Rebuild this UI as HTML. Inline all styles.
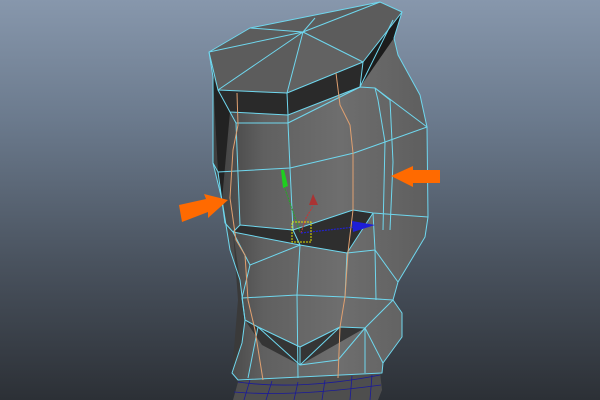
<!DOCTYPE html>
<html><head><style>
html,body{margin:0;padding:0;width:600px;height:400px;overflow:hidden}
body{background:linear-gradient(#8797ac 0%,#6b7a8d 30%,#4a535f 65%,#2c3036 100%)}
svg{position:absolute;left:0;top:0}
</style></head><body>
<svg width="600" height="400" viewBox="0 0 600 400">
<defs>
<linearGradient id="g1" x1="0" x2="1"><stop offset="0" stop-color="#3c3c3c"/><stop offset="0.25" stop-color="#606060"/><stop offset="0.6" stop-color="#6e6e6e"/><stop offset="1" stop-color="#5e5e5e"/></linearGradient>
</defs>
<path d="M233,400 L238,382 L262,378 L380,372 L382,390 L378,400 Z" fill="#4e4e4e"/>
<g stroke="#1a1a9a" stroke-width="0.8" fill="none">
<path d="M238,382 C280,388 330,385 380,375"/><path d="M234,392 C280,396 330,392 381,385"/>
<path d="M250,380 L244,400 M272,381 L266,400 M298,382 L294,400 M325,380 L322,400 M352,376 L350,400 M372,375 L370,400"/>
</g>
<path d="M209,52 L250,28 L380,2 L402,12 L394,38 L398,55 L420,95 L427,127 L428,217 L425,237 L398,282 L393,300 L402,313 L402,337 L383,363 L382,373 L238,380 L232,373 L242,343 L245,320 L240,280 L230,250 L222,200 L213,163 L213,77 Z" fill="url(#g1)"/>
<path d="M209,52 L250,28 L380,2 L402,12 L363,62 L287,93 L218,90 Z" fill="#5c5c5c"/>
<path d="M303,32 L363,62 L287,93 Z" fill="#626262"/>
<path d="M218,90 L287,93 L363,62 L360,87 L288,115 L230,112 Z" fill="#2a2a2a"/>
<path d="M363,62 L402,12 L394,38 L360,87 Z" fill="#1c1c1c"/>
<path d="M213,77 L218,90 L230,112 L222,200 L225,223 L218,172 Z" fill="#222"/>
<path d="M240,225 L293,230 L353,210 L373,213 L347,253 L300,245 L233,232 Z" fill="#2e2e2e"/>
<path d="M245,320 L258,327 L300,347 L340,327 L365,328 L300,365 L262,345 Z" fill="#353535"/>
<path d="M233,232 L240,280 L245,320 L242,343 L232,373 L238,300 Z" fill="#3a3a3a"/>
<g stroke="#6fd7ee" stroke-width="1" fill="none" stroke-linejoin="round">
<path d="M209,52 L250,28 L380,2 L402,12 L394,38 L398,55 L420,95 L427,127 L428,217 L425,237 L398,282 L393,300 L402,313 L402,337 L383,363 L382,373 L238,380 L232,373 L242,343 L245,320 L240,280 L230,250 L222,200 L213,163 L213,77 Z"/>
<path d="M209,52 L218,90 L287,93 L363,62 L402,12"/>
<path d="M250,28 L303,32 L380,2 M209,52 L303,32 L363,62 M218,90 L303,32 L287,93 M303,32 L315,18"/>
<path d="M218,90 L230,112 L288,115 L287,93 M288,115 L360,87 L363,62 M360,87 L393,20"/>
<path d="M230,112 L236,123 L288,123 L360,87 L375,88 L427,127 M288,115 L288,123"/>
<path d="M375,88 L378,100 L385,142 L383,230 M375,88 L390,100 L393,162 L390,230"/>
<path d="M218,172 L290,168 L354,153 L385,142 L427,127"/>
<path d="M288,123 L290,168 L293,230"/>
<path d="M213,163 L218,172 L225,223 M225,223 L233,232"/>
<path d="M233,232 L240,225 L293,230 L353,210 L373,213 L428,217 M233,232 L300,245 L347,253 L373,213 M300,245 L293,230"/>
<path d="M240,225 L236,123"/>
<path d="M233,232 L250,265 L242,298 L297,295 L345,297 L393,300 M300,245 L297,295 L298,378 M347,253 L345,297"/>
<path d="M250,265 L300,245 M347,253 L375,250 L398,282 M373,213 L375,250 L376,300"/>
<path d="M242,298 L245,320 M245,320 L258,327 L300,347 L340,327 L365,328 L383,363 M365,328 L393,300 M258,327 L300,365 L340,327 M300,347 L300,365 M365,328 L365,373 M258,327 L248,378 M300,365 L338,360 L365,328"/>
</g>
<g stroke="#e0a070" stroke-width="1" fill="none">
<path d="M237,93 L238,125 L233,150 L230,198 L236,240 L245,255 L248,300 L255,330 L263,380"/>
<path d="M336,73 L340,105 L350,125 L353,153 L353,210 L348,252 L345,297 L340,327 L338,378"/>
</g>
<line x1="284" y1="186" x2="300" y2="232" stroke="#2a2" stroke-width="1" stroke-dasharray="2,1"/>
<path d="M281,170 L284,170 L288,186 L283,188 Z" fill="#1fcf1f"/>
<path d="M301,233 L306,218 L313,206" stroke="#c33" stroke-width="1" fill="none" stroke-dasharray="2,1"/>
<path d="M313,194 L318,205 L309,205 Z" fill="#a33"/>
<path d="M301,233 L355,227" stroke="#22c" stroke-width="1.2" fill="none" stroke-dasharray="2,1"/>
<path d="M352,221 L375,225 L353,232 Z" fill="#1e1ed8"/>
<rect x="292" y="222" width="19" height="20" fill="none" stroke="#dd0" stroke-width="1" stroke-dasharray="2,1"/>
<path d="M179,205 L206,199 L204,194 L228,200 L208,218 L208,212 L182,222 Z" fill="#ff6a00"/>
<path d="M391,176 L413,166 L413,170 L440,170 L440,183 L413,183 L413,187 Z" fill="#ff6a00"/>
</svg>
</body></html>
